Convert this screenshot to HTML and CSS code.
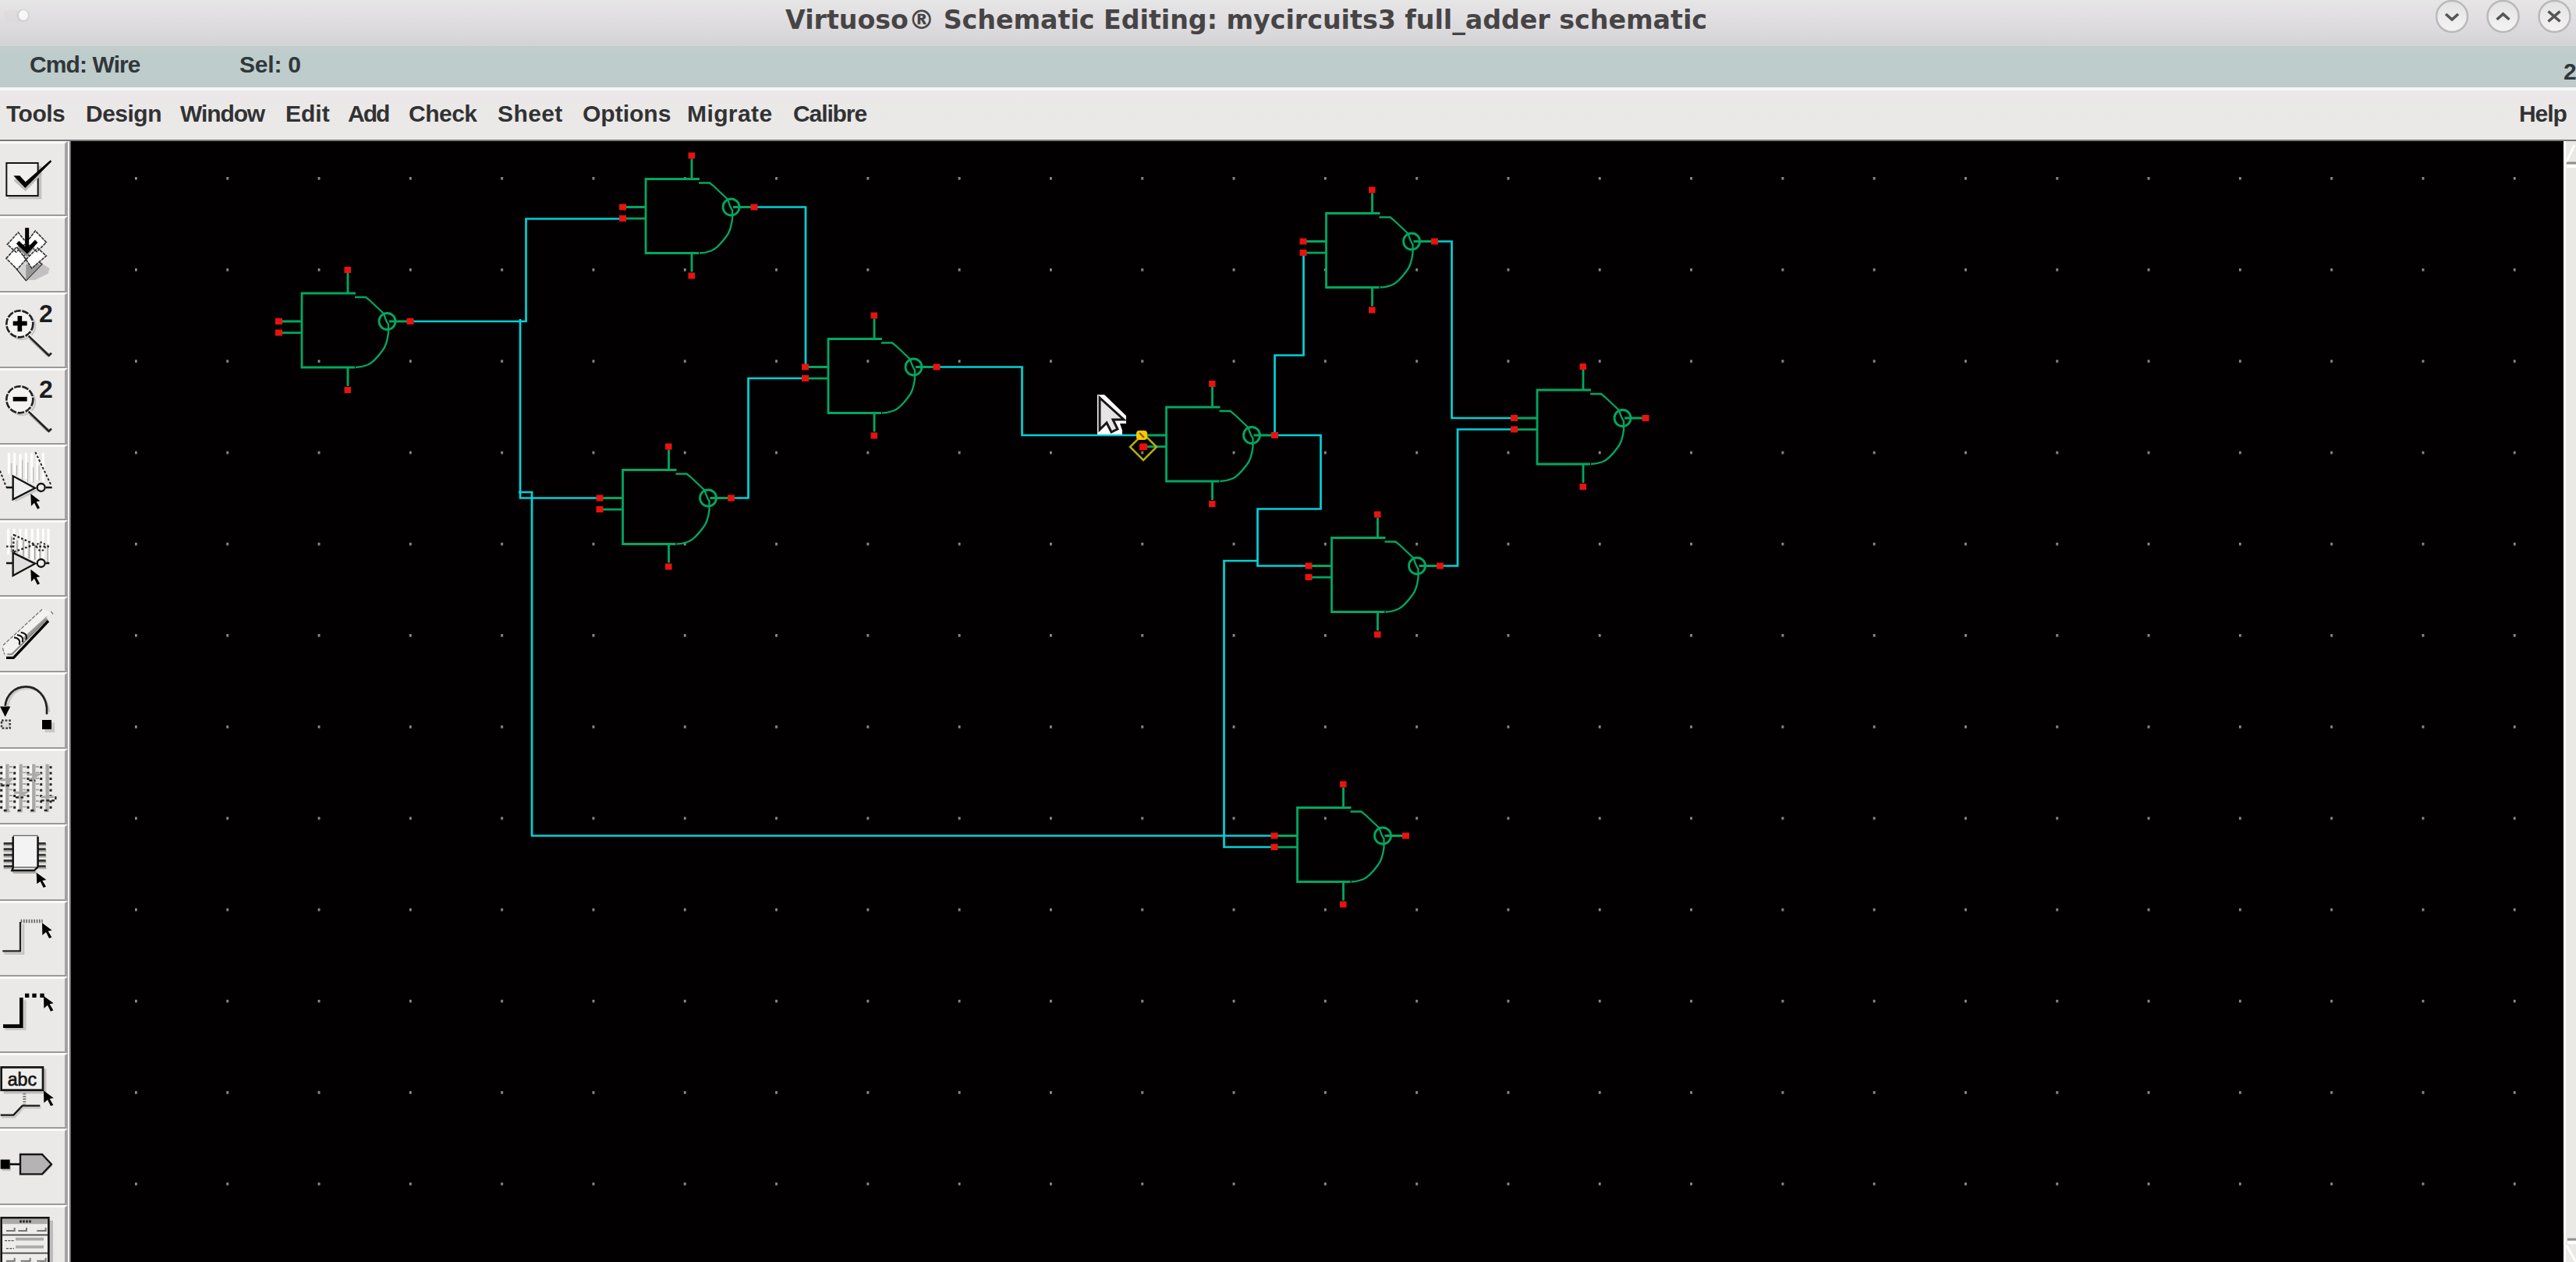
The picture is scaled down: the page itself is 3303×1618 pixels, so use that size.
FILE: index.html
```html
<!DOCTYPE html>
<html lang="en">
<head>
<meta charset="utf-8">
<title>Virtuoso Schematic Editing</title>
<link rel="stylesheet" href="styles.css">
</head>
<body>
<div class="window">
  <header class="titlebar">
    <svg class="title-dot" viewBox="0 0 40 40"><rect x="5" y="13" width="33" height="15" rx="6" fill="#d9d8d8" opacity=".5"/><circle cx="29.500" cy="20" r="8" fill="#d2d1d2"/><ellipse cx="30" cy="19.500" rx="6" ry="6.500" fill="#f8f7f7"/></svg>
    <svg class="title" viewBox="0 0 1200 59">
      <text class="title-text" x="7" y="37" textLength="1182" lengthAdjust="spacingAndGlyphs">Virtuoso® Schematic Editing: mycircuits3 full_adder schematic</text>
    </svg>
    <svg class="controls" viewBox="0 0 180 59">
      <defs><linearGradient id="knob" x1="0" y1="0" x2="0" y2="1"><stop offset="0" stop-color="#e3e2e2"/><stop offset="1" stop-color="#f5f4f4"/></linearGradient></defs>
      <g fill="url(#knob)" stroke="#bab8b9" stroke-width="2.500"><circle cx="21" cy="21" r="20"/><circle cx="86.500" cy="21" r="20"/><circle cx="152.500" cy="21" r="20"/></g>
      <g fill="none" stroke="#565455" stroke-width="3.600"><path d="M13 18l8 7 8-7M78.500 25l8-7 8 7M144.500 14.500l15 13m0-13l-15 13"/></g>
    </svg>
  </header>
  <div class="status"><span class="cmd">Cmd: Wire</span><span class="sel">Sel: 0</span><span class="num">2</span></div>
  <nav class="menu">
    <span class="t1">Tools</span><span class="t1">Design</span><span class="t2">Window</span><span>Edit</span><span class="t3">Add</span><span class="t1">Check</span><span class="w1">Sheet</span><span>Options</span><span class="w1">Migrate</span><span class="t2">Calibre</span><span class="t2">Help</span>
  </nav>
  <main class="work">
    <aside class="tools">
      <div class="tool"><svg viewBox="0 0 258 292.500"><path d="M32 98h128v128H32z" fill="#c4c2c2"/><path d="M25 87h121v126H25z" fill="#f0efee" stroke="#151515" stroke-width="6"/><path d="M58 150l40 36 60-62" fill="none" stroke="#bbb" stroke-width="14"/><path d="M52 136h24l22 24 96-84 5 5-102 102z" fill="#000"/></svg></div>
      <div class="tool"><svg viewBox="0 0 258 292.500"><path d="M105 250l60-62 26 16-6 20-50 25z" fill="#c2c0c0"/><path d="M48 188l52 63 62-63-60-40z" fill="#d4d2d2" stroke="#222" stroke-width="4"/><path d="M100 190v60l60-62z" fill="#999"/><g fill="#fff" stroke="#333" stroke-width="5" stroke-dasharray="12 3"><path d="M28 112l42-46 32 40-40 36zM102 104l34-44 42 44-36 36zM24 166l40-44 36 48-34 38zM100 170l44-44 34 30-56 48z"/></g><path d="M66 100q36 60 74-8l-8 32-28 34-32-26z" fill="#888"/><path d="M104 48v86M68 104l36 34 36-38" fill="none" stroke="#000" stroke-width="15"/></svg></div>
      <div class="tool"><svg viewBox="0 0 258 292.500"><g class="lens"><path d="M117 178l70 66" stroke="#b5b3b3" stroke-width="15"/><circle cx="84" cy="132" r="51" fill="none" stroke="#c7c5c5" stroke-width="7"/><circle cx="76" cy="124" r="51" fill="#f4f3f2" stroke="#222" stroke-width="8" stroke-dasharray="26 5"/><path d="M110 170l78 76 10-10" stroke="#222" stroke-width="8" fill="none"/><path d="M112 163l76 70" stroke="#eee" stroke-width="5"/></g><path d="M76 93v60M50 122h54" stroke="#000" stroke-width="17"/><text class="digit" x="150" y="116">2</text></svg></div>
      <div class="tool"><svg viewBox="0 0 258 292.500"><g class="lens"><path d="M117 178l70 66" stroke="#b5b3b3" stroke-width="15"/><circle cx="84" cy="132" r="51" fill="none" stroke="#c7c5c5" stroke-width="7"/><circle cx="76" cy="124" r="51" fill="#f4f3f2" stroke="#222" stroke-width="8" stroke-dasharray="26 5"/><path d="M110 170l78 76 10-10" stroke="#222" stroke-width="8" fill="none"/><path d="M112 163l76 70" stroke="#eee" stroke-width="5"/></g><path d="M50 122h54" stroke="#000" stroke-width="17"/><text class="digit" x="150" y="116">2</text></svg></div>
      <div class="tool"><svg viewBox="0 0 258 292.500"><path d="M34 35v82M56 35v86M78 40v90M100 35v100M122 35v110M144 40v100M166 35v110" stroke="#fff" stroke-width="9"/><path d="M44 75v46M64 82v40M86 62v78M107 72v76M128 90v60M150 82v60" stroke="#aaa" stroke-width="3"/><path d="M0 104l24 62M136 32l62 130" fill="none" stroke="#222" stroke-width="6" stroke-dasharray="9 7"/><path d="M58 220l90-45" stroke="#c8c6c6" stroke-width="8"/><path d="M24 168h26M50 124v90l85-44zM176 168h24" fill="#eee" stroke="#111" stroke-width="7"/><circle cx="158" cy="168" r="15" fill="#eee" stroke="#111" stroke-width="7"/><path d="M118 192l36 28-14 3 13 24-9 4-12-24-12 12z"/></svg></div>
      <div class="tool"><svg viewBox="0 0 258 292.500"><path d="M32 35v100M54 35v60M78 35v90M100 35v110M124 35v120M146 35v130M166 35v130M186 35v130" stroke="#fff" stroke-width="9"/><path d="M44 65v60M66 80v50M90 78v65M112 85v65M134 95v60M154 90v60M184 95v75" stroke="#999" stroke-width="4"/><path d="M24 104h24M54 60l80 36-84 30zM136 104h54" fill="none" stroke="#222" stroke-width="7" stroke-dasharray="8 7"/><circle cx="158" cy="104" r="16" fill="none" stroke="#222" stroke-width="6" stroke-dasharray="7 7"/><path d="M24 168h26M50 128v88l85-46zM176 168h14" fill="#e0dede" stroke="#111" stroke-width="7"/><circle cx="158" cy="168" r="15" fill="#eee" stroke="#111" stroke-width="7"/><path d="M118 192l36 28-14 3 13 24-9 4-12-24-12 12z"/></svg></div>
      <div class="tool"><svg viewBox="0 0 258 292.500"><path d="M12 190L164 50l36 14L46 226H20z" fill="#f3f2f1"/><path d="M12 190L164 50M10 200l8 26M196 60l8 10" stroke="#777" stroke-width="4" stroke-dasharray="14 5"/><path d="M90 160l92-84-8 20-78 78z" fill="#9b9999"/><path d="M24 238h28L186 96" fill="none" stroke="#000" stroke-width="10"/><path d="M28 224h18l136-136" fill="none" stroke="#888" stroke-width="6"/><path d="M54 160q28 4 20 28M66 150q28 4 20 28M80 140q28 4 20 28" fill="none" stroke="#111" stroke-width="6"/></svg></div>
      <div class="tool"><svg viewBox="0 0 258 292.500"><path d="M28 140Q40 64 106 64T190 156" fill="none" stroke="#c9c7c7" stroke-width="9"/><path d="M20 132C24 90 56 58 100 58S176 95 180 140v24" fill="none" stroke="#222" stroke-width="8"/><path d="M0 134h40l-20 40z"/><path d="M172 196h38v38h-38z" fill="#c8c6c6"/><path d="M162 186h36v36h-36z"/><path d="M6 188h32v30H6z" fill="#ddd" stroke="#333" stroke-width="7" stroke-dasharray="8 6"/></svg></div>
      <div class="tool"><svg viewBox="0 0 258 292.500"><g stroke="#aaa8a8" stroke-width="13"><path d="M28 62v184M80 62v184M130 62v184M182 62v184"/></g><g stroke="#f7f6f6" stroke-width="9"><path d="M16 62v180M68 62v180M118 62v180"/></g><g stroke="#222" stroke-width="9" stroke-dasharray="9 13"><path d="M5 70v164M56 70v164M108 70v164M158 70v164M195 70v164"/></g><g stroke="#999" stroke-width="12" stroke-dasharray="5 17"><path d="M42 70v164M94 70v164M144 70v164"/></g><path d="M2 122h40l-20 22H0M54 172h44l-34 20M104 102h44l-36 22M158 188h50M16 243h22M66 243h20M116 243h20" fill="none" stroke="#aaa" stroke-width="9"/><path d="M4 144h34M60 190h30M112 125h24M158 202h56v-24M14 240h14M68 240h12M118 240h12M170 240h18" fill="none" stroke="#222" stroke-width="7" stroke-dasharray="12 8"/></svg></div>
      <div class="tool"><svg viewBox="0 0 258 292.500"><path d="M14 82h38M14 104h38M14 126h38M14 148h38M14 170h38M144 82h34M144 104h34M144 126h34M144 148h34M144 170h34" stroke="#aaa" stroke-width="9"/><path d="M14 76h38M14 98h38M14 120h38M14 142h38M14 164h38M144 76h32M144 98h32M144 120h32M144 142h32M144 164h32" stroke="#333" stroke-width="8"/><path d="M46 184h96l-6 8H52z" fill="#aaa"/><path d="M52 46h92v122H52z" fill="#f4f3f3" stroke="#666" stroke-width="4"/><path d="M50 50v120l-4 10h86l14-14V50" fill="none" stroke="#111" stroke-width="7"/><path d="M140 188l38 28-15 3 14 23-10 4-12-24-13 10z"/></svg></div>
      <div class="tool"><svg viewBox="0 0 258 292.500"><path d="M16 206h74V92" fill="none" stroke="#c6c4c4" stroke-width="8"/><path d="M10 196h68V84" fill="none" stroke="#222" stroke-width="7"/><path d="M80 81h84" stroke="#666" stroke-width="14" stroke-dasharray="5 5"/><path d="M162 88l38 28-15 3 14 24-10 4-12-24-14 12z"/></svg></div>
      <div class="tool"><svg viewBox="0 0 258 292.500"><path d="M20 204h76V94" fill="none" stroke="#c6c4c4" stroke-width="10"/><path d="M12 194h70V84" fill="none" stroke="#050505" stroke-width="14"/><path d="M96 68h16v16H96zM124 68h16v16h-16zM154 68h16v16h-16z"/><path d="M168 78l38 28-15 3 14 24-10 4-12-24-14 12z"/></svg></div>
      <div class="tool"><svg viewBox="0 0 258 292.500"><path d="M14 64h164v96H14z" fill="#bdbbbb"/><path d="M5 58h160v88H5z" fill="#efeeed" stroke="#151515" stroke-width="8"/><text class="abc" x="29" y="128" textLength="112" lengthAdjust="spacingAndGlyphs">abc</text><path d="M6 250h50l34-36h68" fill="none" stroke="#c6c4c4" stroke-width="7"/><path d="M2 242h50l34-36h68" fill="none" stroke="#151515" stroke-width="7"/><path d="M94 158v42" stroke="#777" stroke-width="12" stroke-dasharray="5 5"/><path d="M168 148l38 28-15 3 14 24-10 4-12-24-14 12z"/></svg></div>
      <div class="tool"><svg viewBox="0 0 258 292.500"><path d="M8 132h34v34H8zM84 180h84l34-34-10-10H84z" fill="#c3c1c1"/><path d="M2 122h36v36H2z"/><path d="M38 140h40" stroke="#111" stroke-width="8"/><path d="M78 102h84l36 38-36 38H78z" fill="#b5b3b3" stroke="#151515" stroke-width="7"/></svg></div>
      <div class="tool"><svg viewBox="0 0 258 292.500"><path d="M14 62h190v231H14z" fill="#bdbbbb"/><path d="M5 52h182v260H5z" fill="#edeceb" stroke="#151515" stroke-width="8"/><path d="M10 56h172v20H10z" fill="#aaa"/><path d="M76 66h44" stroke="#111" stroke-width="9" stroke-dasharray="7 5"/><path d="M9 118h174M9 188h174" stroke="#444" stroke-width="5"/><path d="M24 102h32V90M70 102h32V90M142 102h34V90M24 218h32v-12M80 218h36v-12M142 218h34v-12" fill="none" stroke="#777" stroke-width="6"/><path d="M60 134h108M60 164h108" stroke="#aaa" stroke-width="11"/><path d="M18 140h36M24 170h30" stroke="#555" stroke-width="4" stroke-dasharray="9 4"/></svg></div>
    </aside>
    <svg class="schematic" viewBox="91 181 3196 1437">
      <defs>
        <pattern id="grid" x="173" y="227" width="117.300" height="117.200" patternUnits="userSpaceOnUse"><rect width="2.800" height="3.500" fill="#918e8e"/></pattern>
        <g id="nand">
          <g fill="none" stroke="#00a862" stroke-width="2.800">
            <path d="M69-36H0V59H68M59-36v-26M59 59v24M-26 0H0M-26 14.600H0M112 0h24"/>
            <path d="M68-31h14l5 4 18 17q3 10 6 14v11q-2 16-8 23-11 15-19 18-8 3-15 3" stroke-width="2.300"/>
            <ellipse cx="109.500" cy="0" rx="10.500" ry="10.500"/>
          </g>
          <path d="M54.500-70h8.500v8h-8.500zM54.500 84h8.500v8h-8.500zM-34-4h9v8h-9zM-34 10.600h9v8h-9zM134.500-4h9v8h-9z" fill="#e8120e"/>
        </g>
      </defs>
      <rect x="91" y="181" width="3196" height="1437" fill="url(#grid)"/>
      <g fill="none" stroke="#00d2d8" stroke-width="2.700">
        <path d="M527 412H674.500V280.500H798"/>
        <path d="M667 409V638.500H770"/>
        <path d="M665 631H682V1071.500H1633"/>
        <path d="M967 265.500H1033V470"/>
        <path d="M938 638.500H959.500V485H1032"/>
        <path d="M1201 470.500H1310.500V558H1464"/>
        <path d="M1634.500 558V455.500H1671.500V324"/>
        <path d="M1634 558H1693.500V652.500H1612.500V725.500H1677"/>
        <path d="M1612 719H1569.500V1086H1633"/>
        <path d="M1840 309.500H1861.500V536H1942"/>
        <path d="M1847 725.500H1869V550.500H1942"/>
      </g>
      <use href="#nand" x="387" y="412"/>
      <use href="#nand" x="828" y="265.500"/>
      <use href="#nand" x="798.500" y="638.500"/>
      <use href="#nand" x="1062" y="470.500"/>
      <use href="#nand" x="1495.500" y="558"/>
      <use href="#nand" x="1700.500" y="309.500"/>
      <use href="#nand" x="1707.500" y="725.500"/>
      <use href="#nand" x="1971" y="536"/>
      <use href="#nand" x="1663.500" y="1071.500"/>
      <path d="M1466 556l17 17-17 17-17-17z" fill="none" stroke="#b5b000" stroke-width="2.500"/>
      <path d="M1461 569h10v8h-10z" fill="#f00b08"/>
      <rect x="1457" y="552" width="14" height="12" rx="4" fill="#f8cb00"/><path d="M1461 555l6 6" stroke="#8a4b00" stroke-width="2" fill="none"/>
      <path d="M1407 506h9l28 27v10h-8l3 9v5h-32z" fill="#fff"/>
      <path d="M1410 510v41l9-9 6 12 8-4-6-12h14z" fill="#e6e4e4" stroke="#171717" stroke-width="3"/>
    </svg>
    <svg class="scroll" viewBox="0 0 16 1437">
      <path d="M1.500 0V1437" stroke="#fff" stroke-width="3"/>
      <path d="M4 28h12M5 1408h11" stroke="#918f8f" stroke-width="3"/>
      <path d="M4 32h12M5 1412h11" stroke="#fff" stroke-width="4"/>
      <path d="M4 26L14 5M4 1416l12 21" stroke="#fff" stroke-width="3"/>
    </svg>
  </main>
</div>
</body>
</html>
```
FILE: styles.css
```css
* { box-sizing: border-box; }
body { margin: 0; overflow: hidden; background: #eae9e7; font-family: "Liberation Sans", Arial, sans-serif; }
.window { width: 3303px; height: 1618px; display: flex; flex-direction: column; overflow: hidden; }
.titlebar { height: 59px; flex: none; display: flex; background: linear-gradient(#e7e6e6, #dfdde0 45%, #d4d3d4); }
.title-dot { width: 40px; height: 40px; margin-right: 960px; flex: none; }
.title { width: 1200px; height: 59px; flex: none; margin-right: 923px; }
.title-text { font: bold 33px "DejaVu Sans", sans-serif; fill: #464445; }
.controls { width: 180px; height: 59px; flex: none; }
.status { height: 53px; flex: none; display: flex; padding-left: 38px; background: linear-gradient(#c3cccb, #becccc 20%, #becccc 80%, #c1caca); font-size: 30px; font-weight: bold; line-height: 34px; color: #30373a; white-space: nowrap; }
.cmd { width: 269px; padding-top: 7px; letter-spacing: -.9px; }
.sel { flex: 1; padding-top: 7px; letter-spacing: -.2px; }
.num { width: 16px; padding-top: 16px; overflow: hidden; }
.menu { height: 67px; flex: none; display: grid; grid-template-columns: 102px 121px 135px 80px 78px 114px 109px 134px 136px 2213px auto; padding: 13px 0 0 8px; border-top: 4px solid #f3f7f8; background: linear-gradient(#ece7e9, #eae9e7 60%); font-size: 30px; font-weight: bold; line-height: 34px; color: #323234; white-space: nowrap; }
.t1 { letter-spacing: -.5px; }
.t2 { letter-spacing: -1.1px; }
.t3 { letter-spacing: -2px; }
.w1 { letter-spacing: .4px; }
.work { height: 1439px; flex: none; display: flex; border-top: 2px solid #777; }
.tools { width: 91px; flex: none; overflow: hidden; background: #fafafb; border-right: 2px solid #77757a; }
.tool { width: 87px; height: 97.500px; border-right: 4px solid #a3a1a1; border-bottom: 2px solid #9b9999; border-top: 3px solid #fbfafa; background: #eae9e7; overflow: hidden; }
.tool:first-child { height: 96px; }
.tool svg { display: block; width: 86px; height: 97.500px; margin-top: -4px; }
.digit { font: bold 96px "Liberation Sans", sans-serif; fill: #1c1c1c; }
.abc { font: 70px "Liberation Sans", sans-serif; fill: #161616; stroke: #161616; stroke-width: 2; }
.schematic { width: 3196px; height: 1437px; flex: none; background: #020001; }
.scroll { width: 16px; height: 1437px; flex: none; background: #eae9e7; }
```
